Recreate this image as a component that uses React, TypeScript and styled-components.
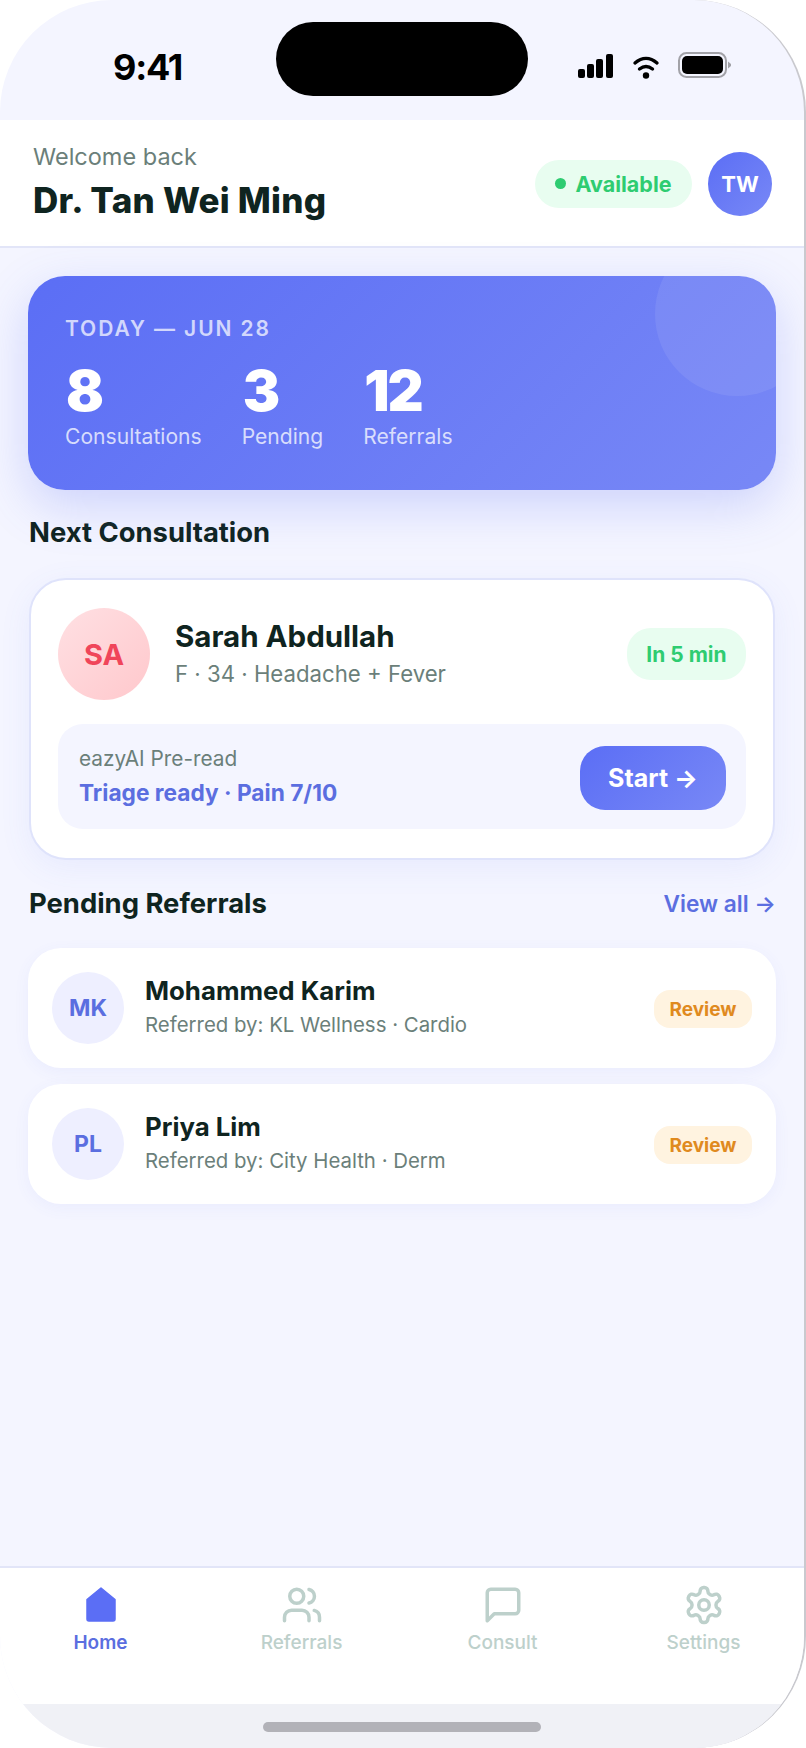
import React from "react";
import styled, { createGlobalStyle } from "styled-components";

const Global = createGlobalStyle`
  html, body { margin: 0; padding: 0; background: #fff; }
  * { box-sizing: border-box; }
  body { font-family: "Inter", "Noto Sans", sans-serif; }
`;

const Phone = styled.div`
  width: 806px; height: 1748px; background: #f4f5ff; border-radius: 112px;
  border-right: 2px solid #c9c9ce; overflow: hidden; display: flex; flex-direction: column;
`;
const StatusBar = styled.div`
  height: 120px; flex: none; display: flex; align-items: flex-start; position: relative;
`;
const Clock = styled.div`
  position: absolute; left: 113px; top: 45px; font-size: 36px; font-weight: 700; color: #000; line-height: 44px; letter-spacing: -1.2px;
`;
const Island = styled.div`
  position: absolute; left: 276px; top: 22px; width: 252px; height: 74px; border-radius: 37px; background: #000;
`;
const StatusIcons = styled.svg`
  position: absolute; left: 576px; top: 50px;
`;
const Header = styled.header`
  height: 128px; flex: none; background: #fff; border-bottom: 2px solid #e2e5f8; padding: 0 32px 2px 33px;
  display: flex; align-items: center; justify-content: space-between;
`;
const Welcome = styled.div`font-size: 23.5px; color: #6b7f7a; line-height: 30px;`;
const DoctorName = styled.div`font-size: 35px; font-weight: 800; color: #0f2420; line-height: 44px; letter-spacing: 0.25px; margin-top: 6px;`;
const HeaderRight = styled.div`display: flex; align-items: center; gap: 16px; margin-top: 3px;`;
const Available = styled.div`
  height: 48px; width: 157px; border-radius: 24px; background: #e8fdf0; color: #2ecc71; font-size: 21.5px; font-weight: 700;
  display: flex; align-items: center; justify-content: center; gap: 9px;
`;
const Dot = styled.span`width: 11px; height: 11px; border-radius: 50%; background: #2ecc71;`;
const Avatar = styled.div<{ $size: number; $bg: string; $color: string; $font: number }>`
  width: ${p => p.$size}px; height: ${p => p.$size}px; border-radius: 50%; background: ${p => p.$bg}; color: ${p => p.$color};
  font-size: ${p => p.$font}px; font-weight: 700; display: flex; align-items: center; justify-content: center; flex: none;
`;
const Main = styled.main`flex: 1; padding: 28px 28px 0; display: flex; flex-direction: column;`;
const Hero = styled.section`
  height: 214px; border-radius: 37px; background: linear-gradient(135deg, #5b6ef5, #7888f6); position: relative; overflow: hidden;
  padding: 40px 37px 0; color: #fff; box-shadow: 0 16px 48px rgba(91,110,245,.25); flex: none;
`;
const HeroCircle = styled.div`
  position: absolute; right: -43px; top: -44px; width: 164px; height: 164px; border-radius: 50%; background: rgba(255,255,255,.08);
`;
const HeroDate = styled.div`font-size: 21px; font-weight: 600; letter-spacing: 1.9px; color: rgba(255,255,255,.72); line-height: 26px;`;
const Stats = styled.div`display: flex; gap: 40px; margin-top: 18px;`;
const Stat = styled.div`display: flex; flex-direction: column;`;
const StatNum = styled.div`font-size: 56px; font-weight: 900; line-height: 62px; letter-spacing: -2px; padding-left: 1px;`;
const StatLabel = styled.div`font-size: 21.1px; color: rgba(255,255,255,.75); line-height: 28px; margin-top: 1px;`;
const SectionRow = styled.div<{ $top: number }>`
  display: flex; align-items: center; justify-content: space-between; margin-top: ${p => p.$top}px; height: 36px; flex: none;
`;
const SectionTitle = styled.h2`margin: 0; font-size: 27.4px; font-weight: 700; color: #0f2420; padding-left: 1px;`;
const ViewAll = styled.div`font-size: 22.7px; font-weight: 600; color: #5b6ee0;`;
const ConsultCard = styled.section`
  margin: 28px 0 0 1px; width: 746px; height: 282px; border-radius: 37px; background: #fff; border: 2px solid #dfe3fb; flex: none;
  box-shadow: 0 8px 32px rgba(91,110,245,.08); padding: 28px 27px 0; display: flex; flex-direction: column;
`;
const PatientRow = styled.div`display: flex; align-items: center; height: 92px;`;
const PatientText = styled.div`flex: 1; margin-left: 25px; padding-bottom: 2px;`;
const PatientName = styled.div`font-size: 29.5px; font-weight: 700; color: #0f2420; line-height: 36px;`;
const PatientSub = styled.div`font-size: 22.2px; color: #6b7f7a; line-height: 30px; margin-top: 5px;`;
const TimePill = styled.div`
  width: 119px; height: 52px; border-radius: 24px; background: #e8fdf0; color: #2ecc71; font-size: 21px; font-weight: 700;
  display: flex; align-items: center; justify-content: center;
`;
const PreRead = styled.div`
  margin-top: 24px; height: 105px; border-radius: 25px; background: #f4f5ff; padding: 0 20px 0 21px;
  display: flex; align-items: center; justify-content: space-between;
`;
const PreLabel = styled.div`font-size: 20.8px; color: #6b7f7a; line-height: 28px;`;
const PreValue = styled.div`font-size: 22.7px; font-weight: 700; color: #5b6ee0; line-height: 30px; margin-top: 5px;`;
const StartButton = styled.button`
  width: 146px; height: 64px; margin-top: 2px; border: 0; border-radius: 25px; background: linear-gradient(135deg, #5b6ef5, #7888f6); color: #fff;
  font: 700 25px "Inter", sans-serif;
`;
const ReferralRow = styled.div<{ $top: number }>`
  margin-top: ${p => p.$top}px; height: 120px; border-radius: 33px; background: #fff; padding: 0 24px; flex: none;
  box-shadow: 0 4px 16px rgba(91,110,245,.06); display: flex; align-items: center;
`;
const RefText = styled.div`flex: 1; margin-left: 21px; padding-bottom: 3px;`;
const RefName = styled.div`font-size: 25.8px; font-weight: 700; color: #0f2420; line-height: 32px;`;
const RefSub = styled.div`font-size: 20.4px; color: #6b7f7a; line-height: 28px; margin-top: 4px;`;
const Review = styled.div`
  width: 98px; height: 38px; margin-top: 2px; border-radius: 16px; background: #fff3e0; color: #e08a1e; font-size: 19px; font-weight: 700;
  display: flex; align-items: center; justify-content: center;
`;
const Nav = styled.nav`
  height: 138px; flex: none; background: #fff; border-top: 2px solid #e2e5f8; display: grid; grid-template-columns: repeat(4, 1fr);
  padding-top: 16px;
`;
const NavItem = styled.div<{ $active?: boolean }>`
  display: flex; flex-direction: column; align-items: center; gap: 3px; font-size: 19px; line-height: 28px;
  font-weight: ${p => (p.$active ? 600 : 500)}; color: ${p => (p.$active ? "#5b6ee0" : "#bdd0cb")};
`;
const NavIcon = styled.svg`width: 42px; height: 42px; display: block;`;
const HomeBar = styled.div`
  height: 44px; flex: none; background: #f0f1f6; display: flex; justify-content: center; padding-top: 18px;
`;
const Indicator = styled.div`width: 278px; height: 10px; border-radius: 5px; background: #b2b2b8;`;

const violet = "linear-gradient(135deg, #5b6ef5, #7888f6)";

export default function App() {
  return (
    <Phone>
      <Global />
      <StatusBar>
        <Clock>9:41</Clock>
        <Island />
        <StatusIcons width="160" height="34" viewBox="0 0 160 34" fill="none">
          <rect x="2" y="19" width="7" height="9" rx="2" fill="#000" />
          <rect x="11" y="14" width="7" height="14" rx="2" fill="#000" />
          <rect x="20" y="9" width="7" height="19" rx="2" fill="#000" />
          <rect x="30" y="4" width="7" height="24" rx="2" fill="#000" />
          <path d="M59 13c7-6 15-6 22 0" stroke="#000" strokeWidth="3.4" strokeLinecap="round" />
          <path d="M63.500 19c4.500-3.600 8.500-3.600 13 0" stroke="#000" strokeWidth="3.400" strokeLinecap="round" />
          <circle cx="70" cy="25.500" r="3.200" fill="#000" />
          <rect x="103" y="3" width="47" height="24" rx="7.500" stroke="#a2a2a8" strokeWidth="2" />
          <rect x="106" y="6" width="41" height="18" rx="5" fill="#000" />
          <path d="M152 11.500l3 2.500v2l-3 2.500z" fill="#a2a2a8" />
        </StatusIcons>
      </StatusBar>
      <Header>
        <div>
          <Welcome>Welcome back</Welcome>
          <DoctorName>Dr. Tan Wei Ming</DoctorName>
        </div>
        <HeaderRight>
          <Available><Dot />Available</Available>
          <Avatar $size={64} $bg={violet} $color="#fff" $font={22}>TW</Avatar>
        </HeaderRight>
      </Header>
      <Main>
        <Hero>
          <HeroCircle />
          <HeroDate>TODAY — JUN 28</HeroDate>
          <Stats>
            <Stat><StatNum>8</StatNum><StatLabel>Consultations</StatLabel></Stat>
            <Stat><StatNum>3</StatNum><StatLabel>Pending</StatLabel></Stat>
            <Stat><StatNum>12</StatNum><StatLabel>Referrals</StatLabel></Stat>
          </Stats>
        </Hero>
        <SectionRow $top={24}><SectionTitle>Next Consultation</SectionTitle></SectionRow>
        <ConsultCard>
          <PatientRow>
            <Avatar $size={92} $bg="linear-gradient(135deg, #ffe0e3, #ffc8cc)" $color="#f0455a" $font={29}>SA</Avatar>
            <PatientText>
              <PatientName>Sarah Abdullah</PatientName>
              <PatientSub>F · 34 · Headache + Fever</PatientSub>
            </PatientText>
            <TimePill>In 5 min</TimePill>
          </PatientRow>
          <PreRead>
            <div>
              <PreLabel>eazyAI Pre-read</PreLabel>
              <PreValue>Triage ready · Pain 7/10</PreValue>
            </div>
            <StartButton>Start →</StartButton>
          </PreRead>
        </ConsultCard>
        <SectionRow $top={25}>
          <SectionTitle>Pending Referrals</SectionTitle>
          <ViewAll>View all →</ViewAll>
        </SectionRow>
        <ReferralRow $top={27}>
          <Avatar $size={72} $bg="#eeefff" $color="#5b6ee0" $font={23}>MK</Avatar>
          <RefText><RefName>Mohammed Karim</RefName><RefSub>Referred by: KL Wellness · Cardio</RefSub></RefText>
          <Review>Review</Review>
        </ReferralRow>
        <ReferralRow $top={16}>
          <Avatar $size={72} $bg="#eeefff" $color="#5b6ee0" $font={23}>PL</Avatar>
          <RefText><RefName>Priya Lim</RefName><RefSub>Referred by: City Health · Derm</RefSub></RefText>
          <Review>Review</Review>
        </ReferralRow>
      </Main>
      <Nav>
        <NavItem $active>
          <NavIcon viewBox="0 0 42 42"><path d="M21 4L35 15.500V35a2 2 0 0 1-2 2H9a2 2 0 0 1-2-2V15.500z" fill="#5b6ef5" stroke="#5b6ef5" strokeWidth="1.500" strokeLinejoin="round" /></NavIcon>
          Home
        </NavItem>
        <NavItem>
          <NavIcon viewBox="0 0 24 24" fill="none" stroke="#bdd0cb" strokeWidth="2" strokeLinecap="round" strokeLinejoin="round">
            <circle cx="9" cy="7" r="4" />
            <path d="M2 21v-2a4 4 0 0 1 4-4h6a4 4 0 0 1 4 4v2" />
            <path d="M16 3.100a4 4 0 0 1 0 7.800" />
            <path d="M22 21v-2a4 4 0 0 0-3-3.900" />
          </NavIcon>
          Referrals
        </NavItem>
        <NavItem>
          <NavIcon viewBox="0 0 24 24" fill="none" stroke="#bdd0cb" strokeWidth="2" strokeLinecap="round" strokeLinejoin="round">
            <path d="M21 15a2 2 0 0 1-2 2H7l-4 4V5a2 2 0 0 1 2-2h14a2 2 0 0 1 2 2z" />
          </NavIcon>
          Consult
        </NavItem>
        <NavItem>
          <NavIcon viewBox="0 0 24 24" fill="none" stroke="#bdd0cb" strokeWidth="2" strokeLinecap="round" strokeLinejoin="round">
            <path d="M12.220 2h-.44a2 2 0 0 0-2 2v.18a2 2 0 0 1-1 1.730l-.43.25a2 2 0 0 1-2 0l-.15-.08a2 2 0 0 0-2.730.73l-.22.38a2 2 0 0 0 .73 2.730l.15.1a2 2 0 0 1 1 1.720v.51a2 2 0 0 1-1 1.740l-.15.09a2 2 0 0 0-.73 2.730l.22.38a2 2 0 0 0 2.730.73l.15-.08a2 2 0 0 1 2 0l.43.25a2 2 0 0 1 1 1.730V20a2 2 0 0 0 2 2h.44a2 2 0 0 0 2-2v-.18a2 2 0 0 1 1-1.730l.43-.25a2 2 0 0 1 2 0l.15.08a2 2 0 0 0 2.730-.73l.22-.39a2 2 0 0 0-.73-2.730l-.15-.08a2 2 0 0 1-1-1.740v-.5a2 2 0 0 1 1-1.740l.15-.09a2 2 0 0 0 .73-2.730l-.22-.38a2 2 0 0 0-2.730-.73l-.15.08a2 2 0 0 1-2 0l-.43-.25a2 2 0 0 1-1-1.730V4a2 2 0 0 0-2-2z" />
            <circle cx="12" cy="12" r="3" />
          </NavIcon>
          Settings
        </NavItem>
      </Nav>
      <HomeBar><Indicator /></HomeBar>
    </Phone>
  );
}
